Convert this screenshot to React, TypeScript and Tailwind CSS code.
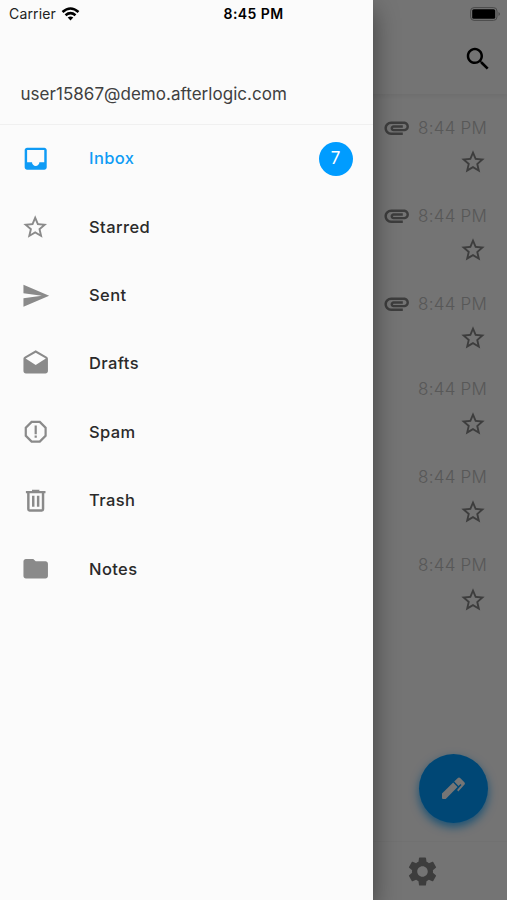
import React from 'react';

const paths = {
  inbox: 'M19 3H4.99C3.88 3 3.01 3.89 3.01 5L3 19c0 1.1.88 2 1.99 2H19c1.1 0 2-.9 2-2V5c0-1.11-.9-2-2-2zm0 12h-4c0 1.66-1.35 3-3 3s-3-1.34-3-3H4.99V5H19v10z',
  star: 'M22 9.24l-7.19-.62L12 2 9.19 8.63 2 9.24l5.46 4.73L5.82 21 12 17.27 18.18 21l-1.63-7.03L22 9.24zM12 15.4l-3.76 2.27 1-4.28-3.32-2.88 4.38-.38L12 6.1l1.71 4.04 4.38.38-3.32 2.88 1 4.28L12 15.4z',
  send: 'M2.01 21L23 12 2.01 3 2 10l15 2-15 2z',
  drafts: 'M21.99 8c0-.72-.37-1.35-.94-1.7L12 1 2.95 6.3C2.38 6.65 2 7.28 2 8v10c0 1.1.9 2 2 2h16c1.1 0 2-.9 2-2l-.01-10zM12 13L3.74 7.84 12 3l8.26 4.84L12 13z',
  spam: 'M8.27 3L3 8.27v7.46L8.27 21h7.46L21 15.73V8.27L15.73 3H8.27zM9.1 4.8h5.8L19.2 9.1v5.8L14.9 19.2H9.1L4.8 14.9V9.1L9.1 4.8zM11.1 15.2h1.8V17h-1.8v-1.8zM11.1 7h1.8v7h-1.8V7z',
  trash: 'M9 3v1H4v2h1v13a2 2 0 0 0 2 2h10a2 2 0 0 0 2-2V6h1V4h-5V3H9zM7 6h10v13H7V6zM9 8v9h2V8H9zM13 8v9h2V8h-2z',
  folder: 'M10 4H4c-1.1 0-1.99.9-1.99 2L2 18c0 1.1.9 2 2 2h16c1.1 0 2-.9 2-2V8c0-1.1-.9-2-2-2h-8l-2-2z',
  search: 'M15.5 14h-.79l-.28-.27C15.41 12.59 16 11.11 16 9.5 16 5.91 13.09 3 9.5 3S3 5.91 3 9.5 5.91 16 9.5 16c1.61 0 3.09-.59 4.23-1.57l.27.28v.79l5 4.99L20.49 19l-4.99-5zm-6 0C7.01 14 5 11.99 5 9.5S7.01 5 9.5 5 14 7.01 14 9.5 11.99 14 9.5 14z',
  clip: 'M2 12.5C2 9.46 4.46 7 7.5 7H18c2.21 0 4 1.79 4 4s-1.79 4-4 4H9.5C8.12 15 7 13.88 7 12.5S8.12 10 9.5 10H17v2H9.41c-.55 0-.55 1 0 1H18c1.1 0 2-.9 2-2s-.9-2-2-2H7.5C5.57 9 4 10.57 4 12.5S5.57 16 7.5 16H17v2H7.5C4.46 18 2 15.54 2 12.5z',
  gear: 'M19.14 12.94c.04-.3.06-.61.06-.94 0-.32-.02-.64-.07-.94l2.03-1.58c.18-.14.23-.41.12-.61l-1.92-3.32c-.12-.22-.37-.29-.59-.22l-2.39.96c-.5-.38-1.03-.7-1.62-.94l-.36-2.54c-.04-.24-.24-.41-.48-.41h-3.84c-.24 0-.43.17-.47.41l-.36 2.54c-.59.24-1.13.57-1.62.94l-2.39-.96c-.22-.08-.47 0-.59.22L2.74 8.87c-.12.21-.08.47.12.61l2.03 1.58c-.05.3-.09.63-.09.94s.02.64.07.94l-2.03 1.58c-.18.14-.23.41-.12.61l1.92 3.32c.12.22.37.29.59.22l2.39-.96c.5.38 1.03.7 1.62.94l.36 2.54c.05.24.24.41.48.41h3.84c.24 0 .44-.17.47-.41l.36-2.54c.59-.24 1.13-.56 1.62-.94l2.39.96c.22.08.47 0 .59-.22l1.92-3.32c.12-.22.07-.47-.12-.61l-2.01-1.58zM12 15.6c-1.98 0-3.6-1.62-3.6-3.6s1.62-3.6 3.6-3.6 3.6 1.62 3.6 3.6-1.62 3.6-3.6 3.6z',
};

function Icon({ name, className }: { name: keyof typeof paths; className: string }) {
  return (
    <svg viewBox="0 0 24 24" fill="currentColor" fillRule="evenodd" className={`shrink-0 ${className}`}>
      <path d={paths[name]} />
    </svg>
  );
}

const folders: { label: string; icon: keyof typeof paths; count?: number }[] = [
  { label: 'Inbox', icon: 'inbox', count: 7 },
  { label: 'Starred', icon: 'star' },
  { label: 'Sent', icon: 'send' },
  { label: 'Drafts', icon: 'drafts' },
  { label: 'Spam', icon: 'spam' },
  { label: 'Trash', icon: 'trash' },
  { label: 'Notes', icon: 'folder' },
];

const messages = [true, true, true, false, false, false];

function MailPage() {
  return (
    <div className="flex h-full flex-col bg-[#fcfcfc]">
      <header className="flex h-[94px] shrink-0 items-end justify-end pr-[14.5px] pb-5 shadow-[0_1px_5px_rgba(0,0,0,0.08)]">
        <Icon name="search" className="size-[30px] text-black" />
      </header>
      <main className="flex grow flex-col pt-[13px]">
        {messages.map((attached, i) => (
          <div key={i} className={`flex h-[88px] flex-col items-end pr-5 ${attached ? 'pt-px' : ''}`}>
            <div className={`flex items-center gap-[7px] text-[17px] font-light tracking-[0.22px] text-[#c0c0c0] ${attached ? 'h-10' : 'mb-[3px] h-9'}`}>
              {attached && <Icon name="clip" className="size-[29.4px] text-[#868686]" />}
              <span className="pt-[2px]">8:44 PM</span>
            </div>
            <Icon name="star" className="size-[28px] text-[#868686]" />
          </div>
        ))}
      </main>
      <div className="flex justify-end pr-[19.5px] pb-[18.5px]">
        <div className="flex size-[69px] items-center justify-center rounded-full bg-[#009cff] shadow-[0_4px_10px_rgba(0,156,255,0.8)]">
          <svg viewBox="0 0 24 24" fill="#fff" className="size-6">
            <path d="M1 17.5 12.2 6.6l4.3 4.3L5.2 22.4q-.5.5-1.2.5H2q-1 0-1-1z" />
            <path d="m13.2 5.6 3.4-3.4q1.4-1.4 2.8 0l3.7 3.7q1.5 1.5.2 2.9l-6 6.6-1.2-1.3 4.4-5.2-1-.9-2 2z" />
          </svg>
        </div>
      </div>
      <footer className="flex h-[59px] shrink-0 items-center border-t border-[#f7f7f7] pl-[405px]">
        <Icon name="gear" className="size-[35px] text-[#868686]" />
      </footer>
    </div>
  );
}

function Drawer() {
  return (
    <aside className="absolute inset-y-0 left-0 w-[372.5px] bg-[#fbfbfb] shadow-[0_10px_24px_rgba(0,0,0,0.45)]">
      <div className="flex h-[125px] items-end border-b border-[#f0f0f0] pb-[18px] pl-[20.5px] text-[17px] leading-6 text-[#404040]">
        <span className="tracking-[0.03px]">user15867@demo.afterlogic.com</span>
      </div>
      <nav className="-mt-[0.6px]">
        {folders.map(({ label, icon, count }) => (
          <div key={label} className={`flex h-[68.4px] items-center gap-[38.5px] pr-5 pl-[20.5px] ${count ? 'text-[#0f9bf5]' : 'text-[#8a8a8a]'}`}>
            <div className="flex size-[30px] shrink-0 items-center justify-center">
              <Icon name={icon} className={icon === 'star' ? 'size-[28.4px]' : 'size-[29.4px]'} />
            </div>
            <span className={`grow text-[16.5px] font-medium tracking-[0.4px] ${count ? '' : 'text-[#2a2a2a]'}`}>{label}</span>
            {count && (
              <span className="flex size-[34px] items-center justify-center rounded-full bg-[#009cff] text-[17px] text-white">{count}</span>
            )}
          </div>
        ))}
      </nav>
    </aside>
  );
}

function StatusBar() {
  return (
    <div className="absolute inset-x-0 top-0 flex h-[27px] items-center text-black">
      <div className="flex w-[223.5px] items-center gap-[5px] pl-[9px] text-[14px] tracking-[0.15px] text-[#222]">
        <span>Carrier</span>
        <svg viewBox="0 0 18 14" className="h-[14px] w-[19px]" fill="none" stroke="#000" strokeWidth="2.6">
          <path d="M1 5q8-7 16 0M4 8.2q5-4.2 10 0" />
          <path d="m9 13.5-2.8-2.9q2.8-2.1 5.6 0z" fill="#000" stroke="none" />
        </svg>
      </div>
      <span className="text-[14px] font-semibold tracking-[0.45px]">8:45 PM</span>
      <svg viewBox="0 0 31 14" className="mr-[6px] ml-auto h-[14px] w-[31px]">
        <rect x=".6" y=".6" width="26.4" height="12.8" rx="3.5" fill="none" stroke="#4a4a4a" strokeWidth="1" />
        <rect x="2.2" y="2.2" width="23" height="9.6" rx="1.6" />
        <path d="M28.5 5q3 2 0 4z" fill="#4a4a4a" />
      </svg>
    </div>
  );
}

export default function App() {
  return (
    <div className="relative h-[900px] w-[507px] overflow-hidden font-['Inter','Liberation_Sans',sans-serif]">
      <MailPage />
      <div className="absolute inset-0 bg-black/54" />
      <Drawer />
      <StatusBar />
    </div>
  );
}
